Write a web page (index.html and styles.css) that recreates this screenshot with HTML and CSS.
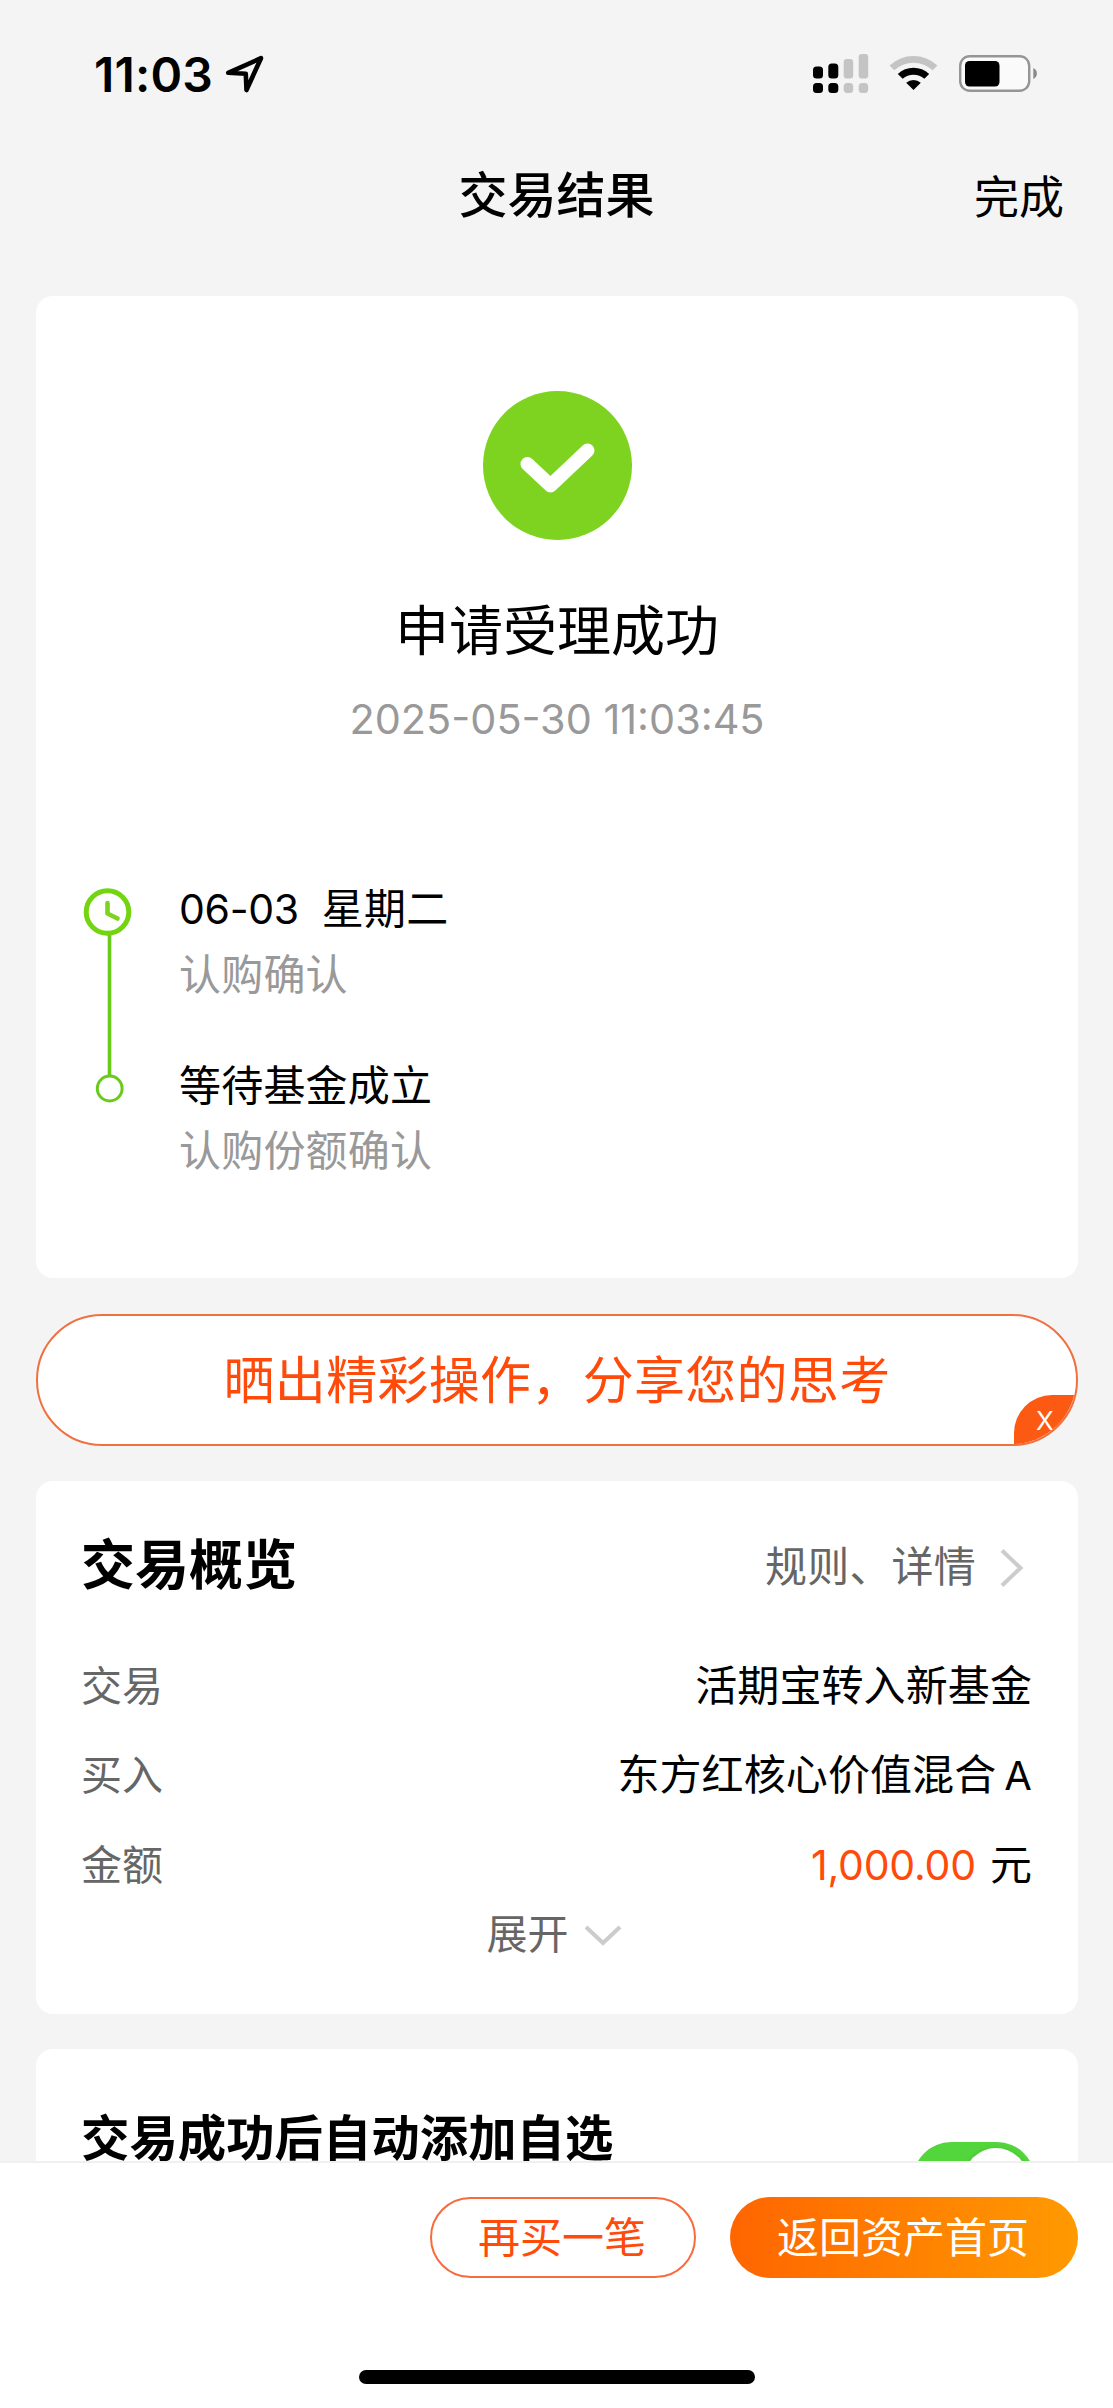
FILE: index.html
```html
<!DOCTYPE html>
<html lang="zh-CN">
<head>
    <meta charset="UTF-8">
    <meta name="viewport" content="width=device-width, initial-scale=1.0">
    <title>交易结果</title>
    <link rel="stylesheet" href="styles.css">
</head>
<body>
    <div class="page">
        <div class="statusbar">
            <span class="time">11:03</span>
            <svg class="location" width="40" height="40" viewBox="0 0 40 40">
                <path d="M3.2 18.8 L36 4.2 L21.5 36 L20.8 19.8 Z" fill="none" stroke="#000" stroke-width="4.6" stroke-linejoin="round"/>
            </svg>
            <div class="indicators">
                <svg width="56" height="40" viewBox="0 0 56 40">
                    <g fill="#000">
                        <rect x="0" y="12.5" width="10" height="12" rx="3.5"/>
                        <rect x="15.3" y="9.5" width="10" height="15" rx="3.5"/>
                        <rect x="0" y="29" width="10" height="10" rx="3.5"/>
                        <rect x="15.3" y="29" width="10" height="10" rx="3.5"/>
                    </g>
                    <g fill="#c4c4c4">
                        <rect x="30.7" y="5" width="9.5" height="19.5" rx="3"/>
                        <rect x="45.7" y="0" width="9.5" height="24.5" rx="3"/>
                        <rect x="30.7" y="29" width="9.5" height="10" rx="3.5"/>
                        <rect x="45.7" y="29" width="9.5" height="10" rx="3.5"/>
                    </g>
                </svg>
                <svg width="50" height="40" viewBox="0 0 50 40">
                    <path d="M.5 11.5 A35 35 0 0 1 48.5 11.5 L43.7 16.3 A28 28 0 0 0 5.3 16.3 Z" fill="#c4c4c4"/>
                    <path d="M8.8 19.9 A23 23 0 0 1 40.2 19.9 L35.3 24.8 A16.2 16.2 0 0 0 13.7 24.8 Z" fill="#000"/>
                    <path d="M17.2 28.7 A11.3 11.3 0 0 1 31.8 28.7 L24.5 36 Z" fill="#000"/>
                </svg>
                <svg width="80" height="40" viewBox="0 0 80 40">
                    <rect x="1.2" y="2.2" width="69" height="34.6" rx="9.5" fill="#fafafa" stroke="#959595" stroke-width="2.4"/>
                    <rect x="6" y="7" width="34.5" height="25.5" rx="4.5" fill="#000"/>
                    <path d="M74.3 14 A6 6 0 0 1 74.3 25 Z" fill="#8a8a8a"/>
                </svg>
            </div>
        </div>

        <div class="navbar">
            <span></span>
            <h1 class="nav-title">交易结果</h1>
            <span class="nav-done">完成</span>
        </div>

        <div class="content">
            <div class="card result">
                <svg class="success" width="149" height="149" viewBox="0 0 149 149">
                    <circle cx="74.5" cy="74.5" r="74.5" fill="#7ed321"/>
                    <path d="M44.5 73 L67.5 94.5 L104.5 59.5" fill="none" stroke="#fff" stroke-width="14" stroke-linecap="round" stroke-linejoin="round"/>
                </svg>
                <h2 class="result-title">申请受理成功</h2>
                <div class="result-time">2025-05-30 11:03:45</div>

                <div class="timeline">
                    <svg class="axis" width="60" height="306" viewBox="0 0 60 306">
                        <line x1="29.5" y1="58" x2="29.5" y2="200" stroke="#69ca1c" stroke-width="3.6"/>
                        <circle cx="27.5" cy="36" r="21.3" fill="#fff" stroke="#72d510" stroke-width="5"/>
                        <path d="M27.5 27 V37.5 L37.5 42.5" fill="none" stroke="#7ed321" stroke-width="4.6" stroke-linecap="round" stroke-linejoin="round"/>
                        <circle cx="29.7" cy="212.5" r="12.4" fill="#fff" stroke="#69ca1c" stroke-width="3"/>
                    </svg>
                    <div class="steps">
                        <div class="step">
                            <div class="step-title"><span class="date">06-03</span>星期二</div>
                            <div class="step-text">认购确认</div>
                        </div>
                        <div class="step">
                            <div class="step-title">等待基金成立</div>
                            <div class="step-text">认购份额确认</div>
                        </div>
                    </div>
                </div>
            </div>

            <div class="share">
                晒出精彩操作，分享您的思考
                <span class="share-close">X</span>
            </div>

            <div class="card overview">
                <div class="overview-head">
                    <h3 class="card-title">交易概览</h3>
                    <span class="more">规则、详情</span>
                    <svg width="24" height="40" viewBox="0 0 24 40">
                        <path d="M2 2.5 L20.5 20 L2 37.5" fill="none" stroke="#ccc" stroke-width="4"/>
                    </svg>
                </div>
                <div class="row">
                    <span class="label">交易</span>
                    <span class="value">活期宝转入新基金</span>
                </div>
                <div class="row">
                    <span class="label">买入</span>
                    <span class="value">东方红核心价值混合<span class="share-class">A</span></span>
                </div>
                <div class="row">
                    <span class="label">金额</span>
                    <span class="value"><span class="amount">1,000.00</span>元</span>
                </div>
                <div class="expand">
                    展开
                    <svg width="38" height="22" viewBox="0 0 38 22">
                        <path d="M2 2 L19 18 L36 2" fill="none" stroke="#ccc" stroke-width="4"/>
                    </svg>
                </div>
            </div>

            <div class="card favorite">
                <h3 class="favorite-title">交易成功后自动添加自选</h3>
                <div class="switch"><div class="knob"></div></div>
            </div>
        </div>

        <div class="footer">
            <div class="buttons">
                <button class="btn btn-again">再买一笔</button>
                <button class="btn btn-home">返回资产首页</button>
            </div>
            <div class="home-indicator"></div>
        </div>
    </div>
</body>
</html>
```

FILE: styles.css
```css
*{
    box-sizing: border-box;
}
body{
    margin: 0px;
    background-color: #f4f4f4;
    color: #000;
    font-family: "Inter", "Noto Sans CJK SC", sans-serif;
    font-size: 42px;
}
h1, h2, h3{
    margin: 0px;
}
svg{
    display: block;
    flex: none;
}
.page{
    width: 1113px;
    height: 2408px;
    display: flex;
    flex-direction: column;
    overflow: hidden;
}

/* status bar */
.statusbar{
    flex: none;
    height: 148px;
    padding: 0px 74px 0px 94px;
    display: flex;
    align-items: center;
}
.time{
    font-size: 48px;
    font-weight: 600;
    letter-spacing: 0.2px;
}
.location{
    margin-left: 12px;
}
.indicators{
    margin-left: auto;
    display: flex;
    gap: 20px;
}

/* navigation */
.navbar{
    flex: none;
    height: 94px;
    padding: 0px 49px;
    display: grid;
    grid-template-columns: 1fr auto 1fr;
    align-items: center;
}
.nav-title{
    padding-top: 2px;
    font-size: 49px;
    font-weight: 500;
    line-height: 70px;
}
.nav-done{
    padding-top: 6px;
    font-size: 45px;
    line-height: 70px;
    text-align: right;
}

/* content */
.content{
    flex: 1;
    min-height: 0px;
    padding: 54px 35px 0px 36px;
    overflow: hidden;
    display: flex;
    flex-direction: column;
}
.card{
    flex: none;
    background-color: white;
    border-radius: 17px;
}
.result{
    height: 982px;
    padding-top: 95px;
    display: flex;
    flex-direction: column;
    align-items: center;
}
.result-title{
    margin-top: 54px;
    font-size: 54px;
    font-weight: 400;
    line-height: 76px;
}
.result-time{
    margin-top: 19px;
    color: #999;
    font-size: 41.4px;
    line-height: 60px;
}
.timeline{
    align-self: stretch;
    margin-top: 127px;
    padding-left: 44px;
    display: flex;
}
.steps{
    margin-left: 39px;
    display: flex;
    flex-direction: column;
    gap: 46px;
    line-height: 65px;
    letter-spacing: 0.2px;
}
.date{
    margin-right: 23px;
    font-size: 41px;
    letter-spacing: -0.3px;
}
.step-text{
    color: #999;
}

.share{
    flex: none;
    position: relative;
    height: 132px;
    margin: 36px 0px 35px;
    overflow: hidden;
    background-color: white;
    border: 2px solid #f0703f;
    border-radius: 66px;
    color: #ff4a0a;
    font-size: 51px;
    letter-spacing: 0.3px;
    line-height: 129px;
    text-align: center;
}
.share-close{
    position: absolute;
    right: -2px;
    bottom: -2px;
    width: 64px;
    height: 51px;
    padding-left: 14px;
    padding-right: 16px;
    background-color: #fc5912;
    border-top-left-radius: 38px;
    color: white;
    font-size: 26px;
    line-height: 52px;
}

.overview{
    height: 533px;
    padding: 43px 46px 0px 45px;
}
.overview-head{
    height: 84px;
    padding-right: 8px;
    margin-bottom: 33px;
    display: flex;
    align-items: center;
    line-height: 84px;
}
.overview-head svg{
    margin-top: 4px;
}
.card-title{
    flex: 1;
    font-size: 54px;
    font-weight: 700;
}
.more{
    margin-right: 24px;
    padding-top: 2px;
    color: #666;
    letter-spacing: 0.2px;
}
.row{
    height: 89.5px;
    display: flex;
    align-items: center;
    justify-content: space-between;
    line-height: 60px;
}
.label{
    color: #666;
    font-size: 41px;
}
.value{
    letter-spacing: 0.1px;
}
.share-class{
    margin-left: 8px;
    font-size: 40px;
}
.amount{
    margin-right: 14px;
    color: #ff4a0a;
    font-size: 41px;
    letter-spacing: -0.2px;
}
.expand{
    padding-right: 5px;
    display: flex;
    align-items: center;
    justify-content: center;
    gap: 15px;
    color: #666;
    font-size: 41px;
    line-height: 48px;
}
.expand svg{
    margin-top: 5px;
}

.favorite{
    height: 260px;
    margin-top: 35px;
    padding: 54px 43px 0px 45px;
    display: flex;
    justify-content: space-between;
}
.favorite-title{
    font-size: 48.4px;
    font-weight: 700;
    line-height: 72px;
}
.switch{
    width: 122px;
    height: 76px;
    margin-top: 39px;
    padding: 6px 7px;
    border-radius: 38px;
    background-color: #53d53c;
}
.knob{
    width: 64px;
    height: 64px;
    margin-left: auto;
    border-radius: 50%;
    background-color: white;
    box-shadow: 0px 2px 6px rgba(0, 0, 0, 0.2);
}

/* footer */
.footer{
    flex: none;
    height: 247px;
    background-color: white;
    border-top: 2px solid #f0f0f0;
    display: flex;
    flex-direction: column;
    align-items: center;
}
.buttons{
    align-self: stretch;
    padding: 34px 35px 0px;
    display: flex;
    justify-content: flex-end;
    gap: 34px;
}
.btn{
    height: 81px;
    padding: 0px 2px 0px 0px;
    border-radius: 41px;
    font-family: inherit;
    font-size: 42px;
    line-height: 76px;
}
.btn-again{
    width: 266px;
    background-color: white;
    border: 2px solid #f76b3c;
    color: #ff4a0a;
}
.btn-home{
    width: 348px;
    border: 0px;
    background-image: linear-gradient(to right, #ff6500, #ff9a00);
    color: white;
}
.home-indicator{
    width: 396px;
    height: 14px;
    margin-top: 92px;
    border-radius: 7px;
    background-color: black;
}
```
